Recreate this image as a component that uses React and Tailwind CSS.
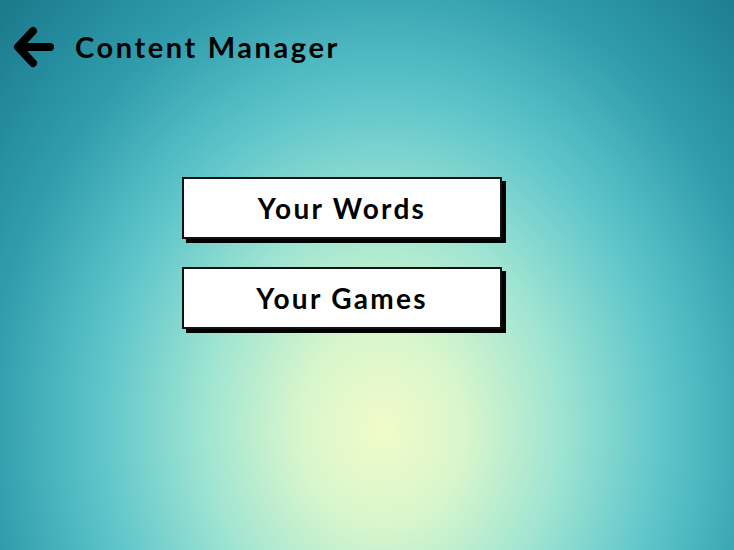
import React from 'react';

const BackArrow = () => (
  <svg width="44" height="44" viewBox="0 0 44 44" fill="none" stroke="#000" strokeWidth="8" strokeLinecap="round" strokeLinejoin="round">
    <path d="M38 22H8" />
    <path d="M21 6L6 22l15 16" />
  </svg>
);

const MenuButton = ({ label }) => (
  <button className="w-[320px] h-[62px] bg-white border-2 border-[#111] shadow-[4px_4px_0_#000] flex items-center justify-center text-[28px] font-bold tracking-[2.3px] text-black">
    {label}
  </button>
);

export default function App() {
  return (
    <div
      className="w-[734px] h-[550px] overflow-hidden flex flex-col bg-[radial-gradient(ellipse_70%_110%_at_52%_78%,#f1fbc9_0%,#d8f6cc_16%,#9ee4d2_35%,#5ec5ca_55%,#2f9cac_77%,#1c7c8e_100%)]"
      style={{ fontFamily: 'Lato, "Open Sans", sans-serif' }}
    >
      <header className="flex items-center gap-[19px] pl-[12px] pt-[25px]">
        <BackArrow />
        <h1 className="text-[29px] font-bold tracking-[2.6px] text-black">Content Manager</h1>
      </header>
      <main className="flex flex-col items-center gap-[28px] pt-[108px] pr-[50px]">
        <MenuButton label="Your Words" />
        <MenuButton label="Your Games" />
      </main>
    </div>
  );
}
